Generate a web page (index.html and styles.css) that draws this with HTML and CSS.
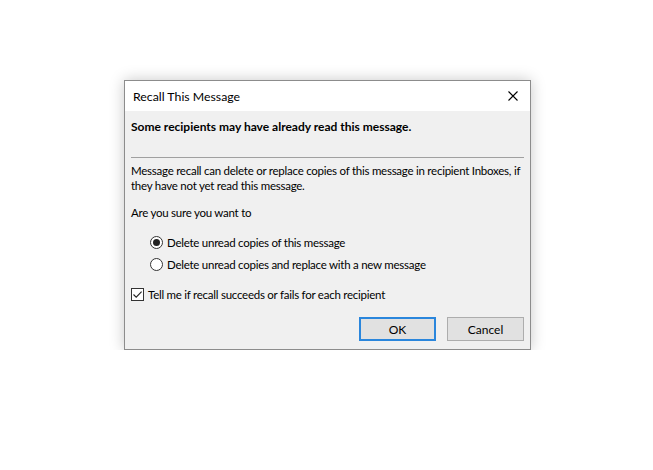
FILE: index.html
```html
<!DOCTYPE html>
<html lang="en">
  <head>
    <meta charset="UTF-8" />
    <meta name="viewport" content="width=device-width, initial-scale=1.0" />
    <title>Recall This Message</title>
    <link rel="stylesheet" href="styles.css">
  </head>
  <body>
    <div class="page">
      <div class="dialog">
        <div class="titlebar">
          <span class="title">Recall This Message</span>
          <span class="close">
            <svg width="10" height="10" viewBox="0 0 10 10">
              <path d="M0.5 0.5 L9.5 9.5 M9.5 0.5 L0.5 9.5" stroke="#000" stroke-width="1.1" fill="none" />
            </svg>
          </span>
        </div>
        <div class="content">
          <p class="warning">Some recipients may have already read this message.</p>
          <div class="separator"></div>
          <p class="info">Message recall can delete or replace copies of this message in recipient Inboxes, if they have not yet read this message.</p>
          <p class="question">Are you sure you want to</p>
          <div class="options">
            <div class="option">
              <span class="radio checked"></span>
              <span>Delete unread copies of this message</span>
            </div>
            <div class="option">
              <span class="radio"></span>
              <span>Delete unread copies and replace with a new message</span>
            </div>
          </div>
          <div class="check-row">
            <span class="checkbox">
              <svg width="11" height="11" viewBox="0 0 11 11">
                <path d="M1.5 5.5 L4.2 8.2 L9.6 2.6" stroke="#222" stroke-width="1.1" fill="none" />
              </svg>
            </span>
            <span>Tell me if recall succeeds or fails for each recipient</span>
          </div>
          <div class="buttons">
            <button type="button" class="btn default">OK</button>
            <button type="button" class="btn">Cancel</button>
          </div>
        </div>
      </div>
    </div>
  </body>
</html>
```

FILE: styles.css
```css
body {
  margin: 0;
  padding: 0;
  background-color: white;
  font-family: Lato, "Noto Sans", Arial, sans-serif;
  font-size: 11.5px;
  letter-spacing: -0.25px;
  color: #000;
}
.page {
  padding: 80px 0 0 124px;
}
.dialog {
  width: 405px;
  border: 1px solid #8c8c8c;
  background-color: #f0f0f0;
  box-shadow: 0 0 14px rgba(0, 0, 0, 0.22);
}
.titlebar {
  display: flex;
  align-items: center;
  justify-content: space-between;
  height: 30px;
  background-color: white;
}
.title {
  padding-left: 8px;
  font-size: 12.3px;
  letter-spacing: 0;
}
.close {
  display: flex;
  align-items: center;
  justify-content: center;
  width: 34px;
  height: 30px;
}
.content {
  padding: 8px 6px 8px 6px;
}
p {
  margin: 0;
}
.warning {
  font-size: 12px;
  font-weight: bold;
  letter-spacing: 0;
  line-height: 16px;
}
.separator {
  height: 1px;
  margin-top: 22px;
  background-color: #a0a0a0;
}
.info {
  margin-top: 5px;
  line-height: 15px;
}
.question {
  margin-top: 12px;
  line-height: 15px;
}
.options {
  margin-top: 11px;
  padding-left: 19px;
}
.option {
  display: flex;
  align-items: center;
  gap: 4px;
  height: 22px;
}
.radio {
  box-sizing: border-box;
  width: 13px;
  height: 13px;
  border: 1px solid #333;
  border-radius: 50%;
  background-color: white;
  display: flex;
  align-items: center;
  justify-content: center;
}
.radio.checked::after {
  content: "";
  width: 7px;
  height: 7px;
  border-radius: 50%;
  background-color: #222;
}
.check-row {
  display: flex;
  align-items: center;
  gap: 4px;
  height: 20px;
  margin-top: 9px;
}
.checkbox {
  box-sizing: border-box;
  width: 13px;
  height: 13px;
  border: 1px solid #333;
  background-color: white;
  display: flex;
  align-items: center;
  justify-content: center;
}
.buttons {
  display: flex;
  justify-content: flex-end;
  gap: 11px;
  margin-top: 13px;
}
.btn {
  box-sizing: border-box;
  width: 77px;
  height: 24px;
  padding: 0;
  font-family: inherit;
  font-size: 12px;
  letter-spacing: 0;
  color: #000;
  background-color: #e1e1e1;
  border: 1px solid #adadad;
}
.btn.default {
  border: 2px solid #2a86dc;
}
```
